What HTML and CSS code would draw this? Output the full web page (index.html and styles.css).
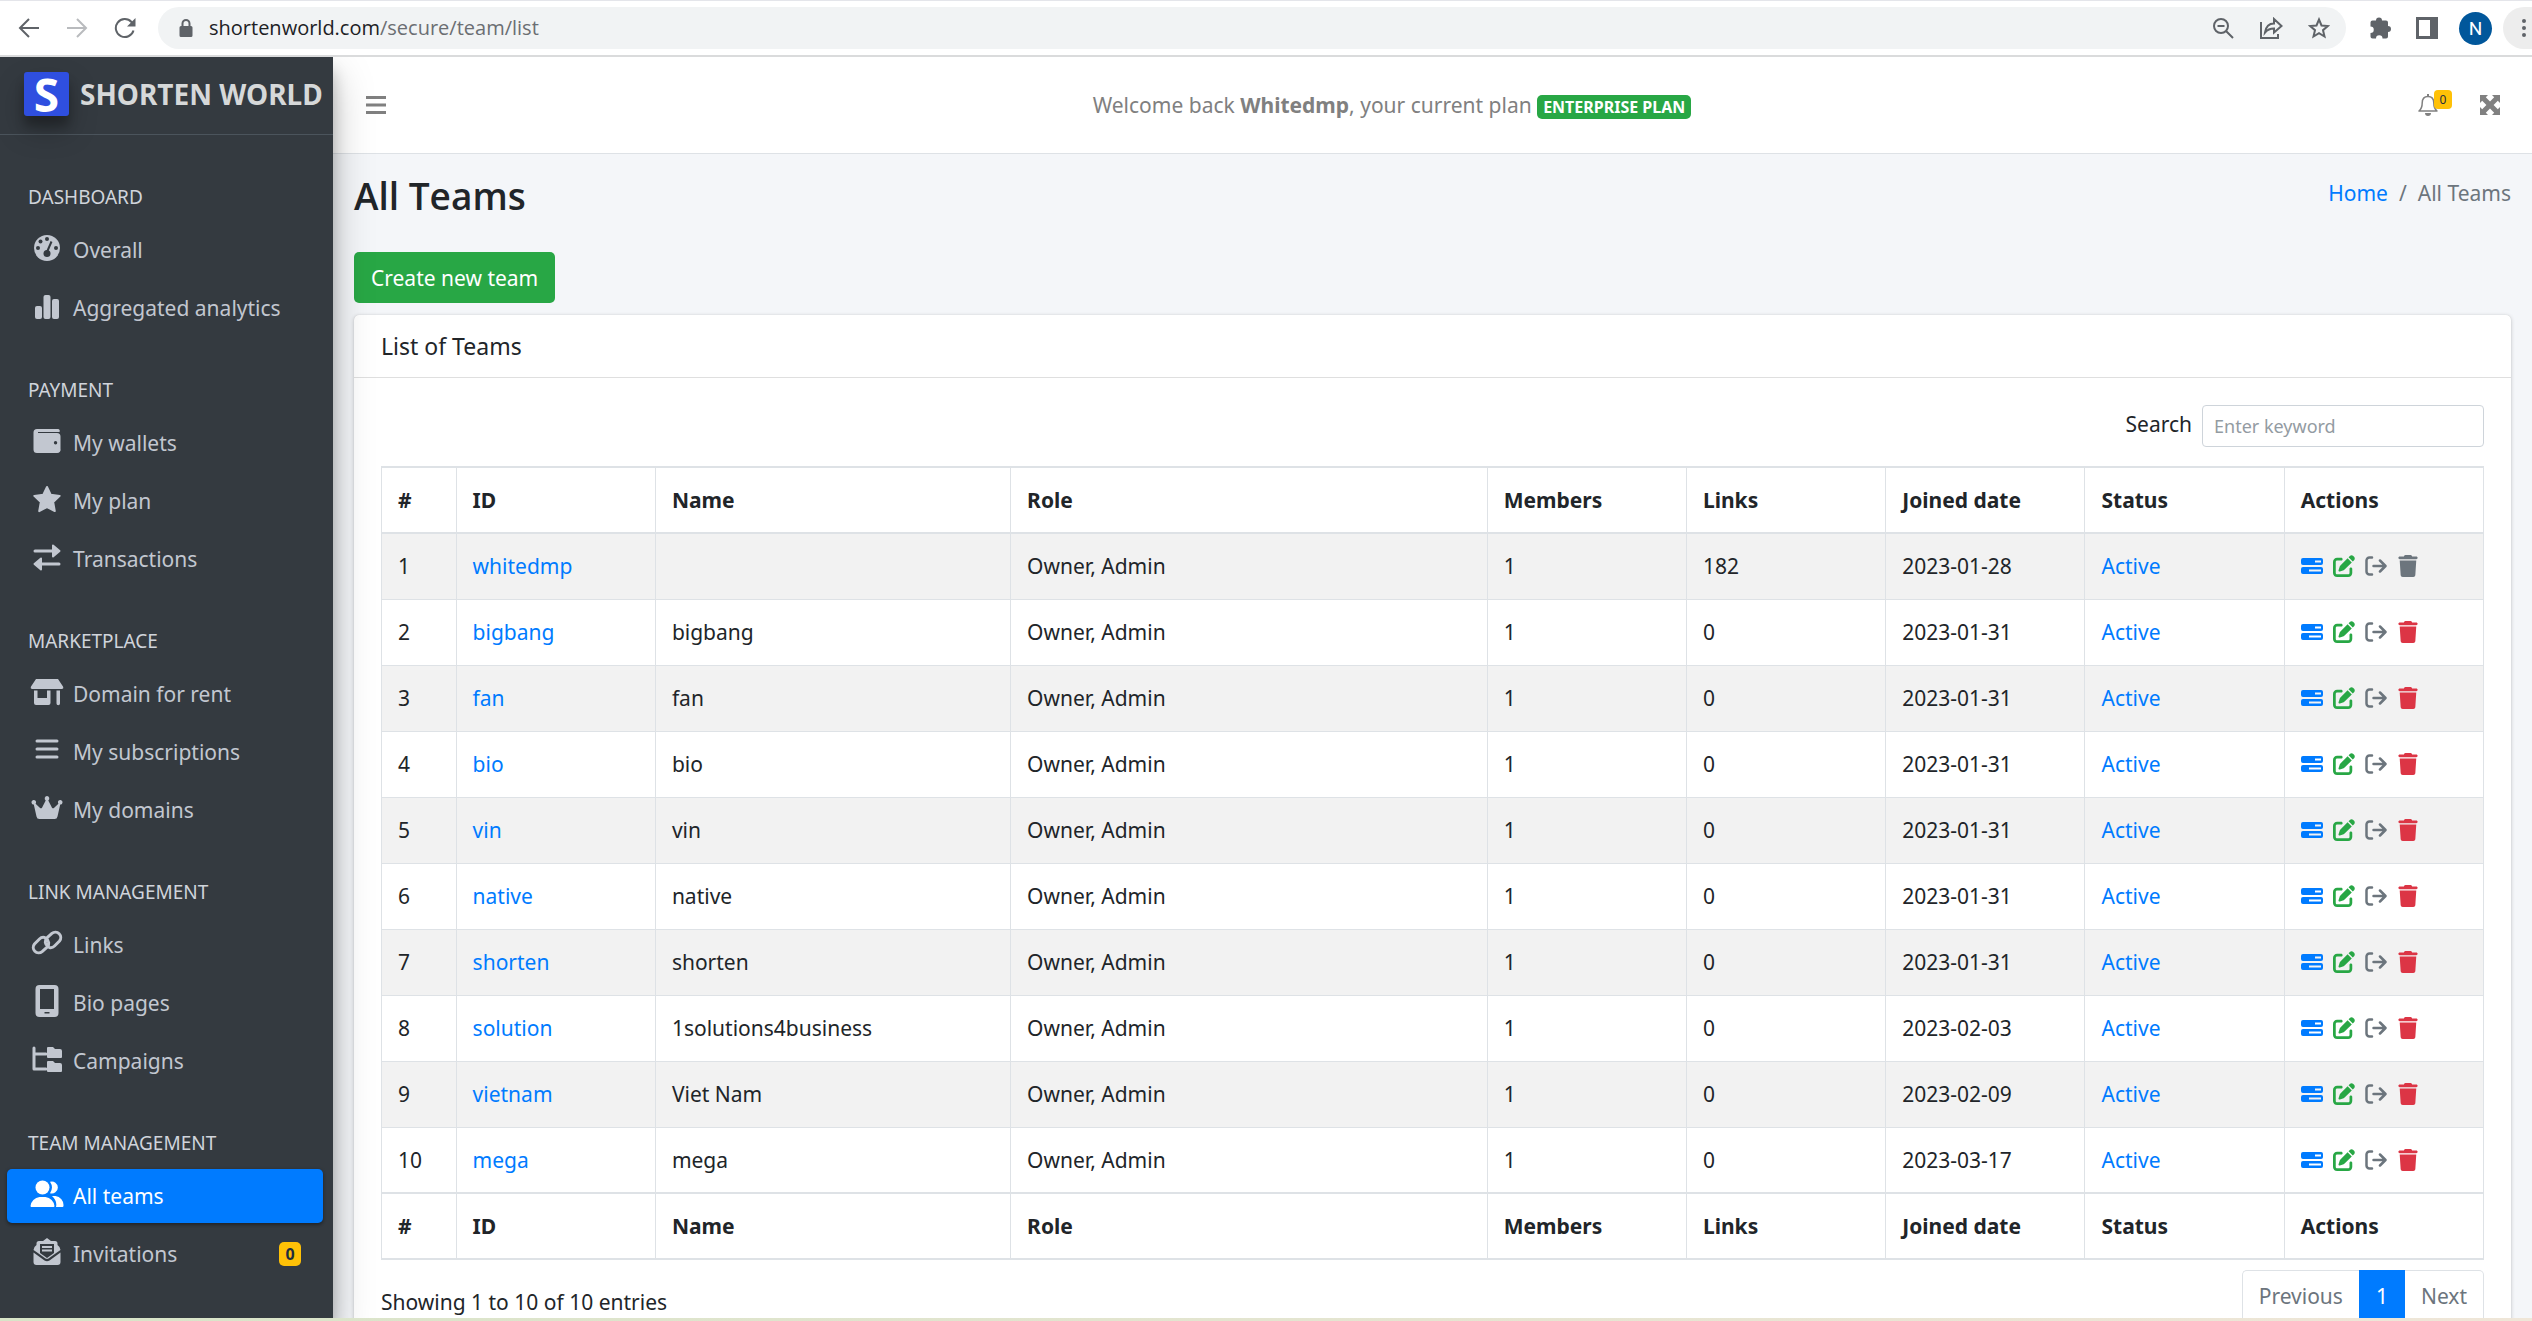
FILE: index.html
```html
<!DOCTYPE html>
<html lang="en">
<head>
<meta charset="utf-8">
<title>All Teams</title>
<link rel="stylesheet" href="styles.css">
</head>
<body>
<svg class="sprite" aria-hidden="true">
  <symbol id="server" viewBox="0 0 22 16"><path fill-rule="evenodd" d="M2 0h18a2 2 0 0 1 2 2v3a2 2 0 0 1-2 2H2a2 2 0 0 1-2-2V2a2 2 0 0 1 2-2zM14 2.500h6v2h-6zM2 9h18a2 2 0 0 1 2 2v3a2 2 0 0 1-2 2H2a2 2 0 0 1-2-2v-3a2 2 0 0 1 2-2zM8 11.500h12v2H8z"/></symbol>
  <symbol id="edit" viewBox="0 0 512 512"><path d="M490.300 40.400C512.200 62.270 512.200 97.730 490.300 119.600L460.100 149.900 362.100 51.880 392.400 21.660C414.300-.2135 449.700-.2135 471.600 21.660L490.300 40.400zM172.400 241.700L339.400 74.650 437.300 172.600 270.300 339.600C264.200 345.800 256.700 350.400 248.400 353.200L159.600 382.800C150.100 385.600 141.500 383.400 135 376.100 128.600 370.500 126.400 361 129.200 352.400L158.800 263.600C161.600 255.300 166.200 247.800 172.400 241.700zM192 63.100C209.700 63.100 224 78.330 224 96S209.700 128 192 128H96C78.330 128 64 142.300 64 160V416C64 433.700 78.330 448 96 448H352C369.700 448 384 433.700 384 416V320C384 302.300 398.300 288 416 288S448 302.300 448 320V416C448 469 405 512 352 512H96C42.980 512 0 469 0 416V160C0 106.100 42.980 64 96 64z"/></symbol>
  <symbol id="leave" viewBox="0 0 22 20"><path fill="none" stroke="currentColor" stroke-width="2.500" stroke-linecap="round" stroke-linejoin="round" d="M7 1.500H4.500a3 3 0 0 0-3 3v11a3 3 0 0 0 3 3H7M8.500 10H20M15 4.500l5.500 5.500-5.500 5.500"/></symbol>
  <symbol id="trash" viewBox="0 0 448 512"><path d="M135.200 17.690C140.600 6.848 151.700 0 163.800 0H284.200C296.300 0 307.400 6.848 312.800 17.690L320 32H416C433.700 32 448 46.330 448 64S433.700 96 416 96H32C14.330 96 0 81.670 0 64S14.330 32 32 32H128L135.200 17.690zM31.100 128H416L394.800 466.100C393.200 492.300 372.300 512 346.900 512H101.100C75.750 512 54.770 492.300 53.190 466.100L31.100 128z"/></symbol>
</svg>

<header class="browser">
  <div class="nav-buttons">
    <button class="icon-btn" aria-label="Back"><svg width="22" height="22" viewBox="0 0 22 22" class="line"><path d="M21 11H2M11 2l-9 9 9 9"/></svg></button>
    <button class="icon-btn faded" aria-label="Forward"><svg width="22" height="22" viewBox="0 0 22 22" class="line"><path d="M1 11h19M11 2l9 9-9 9"/></svg></button>
    <button class="icon-btn" aria-label="Reload"><svg width="22" height="22" viewBox="0 0 22 22" class="line"><path d="M19.500 13.500A9 9 0 1 1 17.500 5l2 2"/><path fill="currentColor" stroke="none" d="M21.500 1v8.500H13z"/></svg></button>
  </div>
  <div class="omnibox">
    <svg width="14" height="18" viewBox="0 0 14 18"><path fill="currentColor" d="M2 7h10a1.500 1.500 0 0 1 1.500 1.500v8A1.500 1.500 0 0 1 12 18H2a1.500 1.500 0 0 1-1.500-1.500v-8A1.500 1.500 0 0 1 2 7z"/><path fill="none" stroke="currentColor" stroke-width="2" d="M3.500 8V4.500a3.500 3.500 0 0 1 7 0V8"/></svg>
    <span class="url">shortenworld.com<span class="path">/secure/team/list</span></span>
    <button class="icon-btn" aria-label="Zoom"><svg width="22" height="22" viewBox="0 0 22 22" class="line"><circle cx="9" cy="9" r="7"/><path d="M5.500 9h7M14 14l7 7"/></svg></button>
    <button class="icon-btn" aria-label="Share"><svg width="24" height="22" viewBox="0 0 24 22" class="line thin"><path d="M2 5v16h17v-4M6 15.500C7 9 10 6.500 15 6.500V2l7.500 7L15 15.500V11.500c-4 0-6.500 1-9 4z"/></svg></button>
    <button class="icon-btn" aria-label="Bookmark"><svg width="22" height="22" viewBox="0 0 22 22" class="line"><path d="M11 2.500l2.500 6 6.300.5-4.800 4.200 1.500 6.300L11 16.200l-5.500 3.300L7 13.200 2.200 9l6.300-.5z"/></svg></button>
  </div>
  <button class="icon-btn" aria-label="Extensions"><svg width="24" height="22" viewBox="0 0 24 22"><path fill="currentColor" d="M1.500 5.500a2 2 0 0 1 2-2H7a3 3 0 0 1 6 0h4a2 2 0 0 1 2 2V9a3 3 0 0 1 0 6v4.500a2 2 0 0 1-2 2h-3.500a3.200 3.200 0 0 0-6.500 0H3.500a2 2 0 0 1-2-2V16a3.200 3.200 0 0 0 0-6.500z"/></svg></button>
  <button class="icon-btn" aria-label="Side panel"><svg width="22" height="22" viewBox="0 0 22 22"><path fill="currentColor" fill-rule="evenodd" d="M0 0h22v22H0zM3 3v16h11V3z"/></svg></button>
  <button class="avatar">N</button>
  <button class="more" aria-label="Menu"><svg width="6" height="20" viewBox="0 0 6 20" fill="currentColor"><circle cx="3" cy="3" r="2"/><circle cx="3" cy="10" r="2"/><circle cx="3" cy="17" r="2"/></svg></button>
</header>

<div class="app">
  <aside class="sidebar">
    <a class="brand" href="#"><span class="logo">S</span>SHORTEN WORLD</a>
    <nav class="menu">
      <h2>DASHBOARD</h2>
      <a href="#"><svg viewBox="0 0 34 28"><circle cx="17" cy="14" r="13"/><g class="cut"><circle cx="17" cy="5" r="2"/><circle cx="10.500" cy="7.500" r="2"/><circle cx="8" cy="14" r="2"/><circle cx="26" cy="14" r="2"/><circle cx="17" cy="19.500" r="3.500"/></g><path class="cut-line" d="M17 18l4.500-10.500"/></svg>Overall</a>
      <a href="#"><svg viewBox="0 0 34 28"><rect x="5" y="14" width="7" height="13" rx="2"/><rect x="13.500" y="3" width="7" height="24" rx="2"/><rect x="22" y="7" width="7" height="20" rx="2"/></svg>Aggregated analytics</a>
      <h2>PAYMENT</h2>
      <a href="#"><svg viewBox="0 0 34 28"><path fill-rule="evenodd" d="M7 2h21a2 2 0 0 1 1.500 3H8v1h19a3.500 3.500 0 0 1 3.500 3.500v12A3.500 3.500 0 0 1 27 26H7a3.500 3.500 0 0 1-3.500-3.500v-17A3.500 3.500 0 0 1 7 2zM25.500 14a1.700 1.700 0 1 0 .1 3.400A1.700 1.700 0 0 0 25.500 14z"/></svg>My wallets</a>
      <a href="#"><svg viewBox="0 0 34 28"><path stroke="currentColor" stroke-width="2" stroke-linejoin="round" d="M17 2l3.700 7.700 9 1.200-6.500 6.200 1.600 9L17 22l-7.800 4.100 1.600-9-6.500-6.200 9-1.200z"/></svg>My plan</a>
      <a href="#"><svg viewBox="0 0 34 28"><path class="stroke" d="M5 8h18M29 21H11"/><path stroke="currentColor" stroke-width="2" stroke-linejoin="round" d="M23 2.500v11L29.500 8zM11 15.500v11L4.500 21z"/></svg>Transactions</a>
      <h2>MARKETPLACE</h2>
      <a href="#"><svg viewBox="0 0 34 28"><path d="M6 1h22l5 7.500q1 2.500-1.500 2.500h-29Q0 11 1 8.500zM4 12.500h3.500V20H17v-7.500h3.500V25a2 2 0 0 1-2 2H6a2 2 0 0 1-2-2zM26.500 12.500H30v13a1.500 1.500 0 0 1-3.500 0z"/></svg>Domain for rent</a>
      <a href="#"><svg viewBox="0 0 34 28"><path class="stroke" d="M7 5h20M7 13h20M7 21h20"/></svg>My subscriptions</a>
      <a href="#"><svg viewBox="0 0 34 28"><path d="M17 2a2.500 2.500 0 0 1 1.300 4.500l3.700 7.200q1 1 2.200 0l4.200-4a2.300 2.300 0 1 1 1.800.9L27.500 22.500a3 3 0 0 1-3 2.500h-15a3 3 0 0 1-3-2.500L3.800 10.600a2.300 2.300 0 1 1 1.800-.9l4.200 4q1.200 1 2.200 0l3.700-7.200A2.500 2.500 0 0 1 17 2z"/></svg>My domains</a>
      <h2>LINK MANAGEMENT</h2>
      <a href="#"><svg viewBox="0 0 34 28"><path class="stroke" d="M19.500 18.500a5.500 5.500 0 0 0 5-1.500l5-5a5.400 5.400 0 0 0-7.600-7.600l-5 4.500a5.400 5.400 0 0 0 1 8.500M14.500 8.500a5.500 5.500 0 0 0-5 1.500l-5 5a5.400 5.400 0 0 0 7.600 7.600l5-4.500a5.400 5.400 0 0 0-1-8.500"/></svg>Links</a>
      <a href="#"><svg viewBox="0 0 34 32"><path fill-rule="evenodd" d="M9.500 0h15a4 4 0 0 1 4 4v24a4 4 0 0 1-4 4h-15a4 4 0 0 1-4-4V4a4 4 0 0 1 4-4zM10 4v20h14V4zM14.500 27v1.500h5V27z"/></svg>Bio pages</a>
      <a href="#"><svg viewBox="0 0 34 28"><path class="stroke" stroke-linejoin="round" d="M4 3v21h12M4 9h12"/><path d="M18 2h5l2 2h5a2 2 0 0 1 2 2v6a1 1 0 0 1-1 1H18a1 1 0 0 1-1-1V3a1 1 0 0 1 1-1zM18 16h5l2 2h5a2 2 0 0 1 2 2v6a1 1 0 0 1-1 1H18a1 1 0 0 1-1-1v-9a1 1 0 0 1 1-1z"/></svg>Campaigns</a>
      <h2>TEAM MANAGEMENT</h2>
      <a href="#" class="active"><svg viewBox="0 0 34 28"><circle cx="12.500" cy="7.500" r="7"/><path d="M.5 26a10 10 0 0 1 9-9h6a10 10 0 0 1 9 9q0 1-1 1h-22q-1 0-1-1zM20 1.800a6 6 0 1 1 0 11.400 10 10 0 0 0 0-11.400zM22 16h3.500a9 9 0 0 1 8 9.500q0 1.500-1 1.500H26q1.500-6-4-11z"/></svg>All teams</a>
      <a href="#"><svg viewBox="0 0 34 28"><path d="M3.500 14.500l11 8q2.500 1.500 5 0l11-8V24a3 3 0 0 1-3 3h-21a3 3 0 0 1-3-3z"/><path fill-rule="evenodd" d="M3.500 12q0-3 3-5V5.500q0-2.500 2.500-2.500h4l4-3 4 3h4q2.500 0 2.500 2.500V7q3 2 3 5l-4 2.800-8 5.700q-1.500.8-3 0L7.500 14.800zM10 6v9l7 5 7-5V6z"/><path d="M12 8h10v2H12zM12 11.500h10v2H12z"/></svg>Invitations<span class="count">0</span></a>
    </nav>
  </aside>

  <div class="main">
    <header class="topbar">
      <button class="icon-btn" aria-label="Toggle menu"><svg width="20" height="18" viewBox="0 0 20 18"><path fill="none" stroke="currentColor" stroke-width="3" d="M0 1.500h20M0 9h20M0 16.500h20"/></svg></button>
      <p class="welcome">Welcome back <b>Whitedmp</b>, your current plan <span class="plan">ENTERPRISE PLAN</span></p>
      <button class="icon-btn bell" aria-label="Notifications"><svg width="20" height="22" viewBox="0 0 20 22"><path fill="none" stroke="currentColor" stroke-width="1.500" stroke-linejoin="round" d="M10 2.500C5.500 2.500 4.200 6 4.200 9c0 4-.8 6-3.200 8h18c-2.400-2-3.200-4-3.200-8 0-3-1.300-6.500-5.800-6.500z"/><path fill="currentColor" d="M9 0h2v3H9zM7 19h6a3 3 0 0 1-6 0z"/></svg><span class="dot">0</span></button>
      <button class="icon-btn" aria-label="Full screen"><svg width="20" height="20" viewBox="0 0 20 20"><path fill="currentColor" d="M0 0h8L5.800 2.200 10 6.400l4.200-4.200L12 0h8v8l-2.200-2.200L13.600 10l4.200 4.200L20 12v8h-8l2.200-2.200L10 13.600l-4.200 4.200L8 20H0v-8l2.200 2.200L6.400 10 2.200 5.800 0 8z"/></svg></button>
    </header>

    <main class="content">
      <div class="page-head">
        <h1>All Teams</h1>
        <nav class="crumbs"><a href="#">Home</a><span>/</span><span>All Teams</span></nav>
      </div>
      <button class="create">Create new team</button>
      <section class="card">
        <h3 class="card-title">List of Teams</h3>
        <div class="card-body">
          <div class="search"><label for="q">Search</label><input id="q" type="text" placeholder="Enter keyword"></div>
          <table>
            <colgroup><col class="c-num"><col class="c-std"><col class="c-name"><col><col class="c-std"><col class="c-std"><col class="c-std"><col class="c-std"><col class="c-std"></colgroup>
            <thead><tr><th>#</th><th>ID</th><th>Name</th><th>Role</th><th>Members</th><th>Links</th><th>Joined date</th><th>Status</th><th>Actions</th></tr></thead>
            <tbody id="rows"></tbody>
            <tfoot><tr><th>#</th><th>ID</th><th>Name</th><th>Role</th><th>Members</th><th>Links</th><th>Joined date</th><th>Status</th><th>Actions</th></tr></tfoot>
          </table>
          <div class="table-foot">
            <p>Showing 1 to 10 of 10 entries</p>
            <nav class="pages"><button>Previous</button><button class="current">1</button><button>Next</button></nav>
          </div>
        </div>
      </section>
    </main>
  </div>
</div>
<div class="desktop-edge"></div>
<script src="teams.js"></script>
</body>
</html>
```
FILE: teams.js
```js
const teams = [
  ["whitedmp", "", 182, "2023-01-28"],
  ["bigbang", "bigbang", 0, "2023-01-31"],
  ["fan", "fan", 0, "2023-01-31"],
  ["bio", "bio", 0, "2023-01-31"],
  ["vin", "vin", 0, "2023-01-31"],
  ["native", "native", 0, "2023-01-31"],
  ["shorten", "shorten", 0, "2023-01-31"],
  ["solution", "1solutions4business", 0, "2023-02-03"],
  ["vietnam", "Viet Nam", 0, "2023-02-09"],
  ["mega", "mega", 0, "2023-03-17"]
];
const action = (name, label) =>
  `<button class="${name}" aria-label="${label}"><svg><use href="#${name}"/></svg></button>`;
document.getElementById("rows").innerHTML = teams.map(([id, name, links, date], i) => `
  <tr><td>${i + 1}</td><td><a href="#">${id}</a></td><td>${name}</td><td>Owner, Admin</td>
  <td>1</td><td>${links}</td><td>${date}</td><td><a href="#">Active</a></td>
  <td><div class="actions">${action("server", "Manage")}${action("edit", "Edit")}${action("leave", "Leave")}${action("trash", "Delete")}</div></td></tr>`).join("");
```
FILE: styles.css
```css
* { box-sizing: border-box; }
body {
  margin: 0;
  height: 100vh;
  overflow: hidden;
  display: flex;
  flex-direction: column;
  font: 21px/32px "Noto Sans", "Open Sans", sans-serif;
  color: #212529;
  background: #fff;
}
h1, h2, h3, p { margin: 0; font-weight: 400; }
a { color: #007bff; text-decoration: none; }
button { font: inherit; color: inherit; border: 0; padding: 0; background: none; }
svg { display: block; flex: none; }
.sprite { display: none; }
.icon-btn { display: flex; align-items: center; }
.line { fill: none; stroke: currentColor; stroke-width: 2; }

/* browser toolbar */
.browser {
  flex: none;
  height: 57px;
  display: flex;
  align-items: center;
  border-top: 1px solid #e4e5ea;
  border-bottom: 2px solid #dadbdc;
  color: #5f6368;
  overflow: hidden;
}
.nav-buttons { display: flex; gap: 26px; padding: 0 22px 0 18px; }
.faded { color: #b9bbbe; }
.omnibox {
  flex: 1;
  height: 42px;
  display: flex;
  align-items: center;
  gap: 25px;
  padding: 0 16px 0 21px;
  border-radius: 21px;
  background: #f1f3f4;
}
.url { flex: 1; margin-left: -9px; color: #202124; font-family: "Open Sans", sans-serif; font-size: 20px; }
.path { color: #6b6e72; }
.browser > .icon-btn { margin-left: 23px; }
.avatar {
  width: 33px;
  height: 33px;
  margin-left: 21px;
  border-radius: 50%;
  background: #01579b;
  color: #fff;
  font: 19px/33px Roboto, sans-serif;
}
.more {
  width: 29px;
  height: 42px;
  margin-left: 11px;
  padding-left: 18px;
  border-radius: 21px 0 0 21px;
  background: #ededed;
}

/* application */
.app { flex: 1; min-height: 0; display: flex; overflow: hidden; }
.sidebar {
  flex: none;
  width: 333px;
  z-index: 1;
  background: #343a40;
  box-shadow: 0 19px 38px rgba(0, 0, 0, .25), 0 14px 14px rgba(0, 0, 0, .22);
}
.brand {
  height: 78px;
  display: flex;
  align-items: center;
  gap: 11px;
  padding: 0 0 4px 24px;
  border-bottom: 1px solid #4b545c;
  color: #d6d8d9;
  font-size: 28px;
  font-weight: 700;
  white-space: nowrap;
}
.logo {
  width: 45px;
  height: 44px;
  border-radius: 3px;
  background: #2f4fe0;
  box-shadow: 0 14px 28px rgba(0, 0, 0, .25), 0 10px 10px rgba(0, 0, 0, .22);
  color: #fff;
  font: 700 46px/44px "Noto Sans", sans-serif;
  text-align: center;
}
.menu { padding: 11px 10px 0 7px; }
.menu h2 {
  padding: 37px 21px 12px;
  font-size: 19px;
  line-height: 28px;
  color: #d0d4db;
}
.menu a {
  height: 54px;
  display: flex;
  align-items: center;
  gap: 9px;
  margin-bottom: 4px;
  padding: 0 22px 0 23px;
  border-radius: 5px;
  color: #c2c7d0;
}
.menu svg { width: 34px; height: 32px; margin-bottom: 5px; fill: currentColor; }
.menu .cut { fill: #343a40; }
.menu .cut-line { stroke: #343a40; stroke-width: 2; }
.menu .stroke { fill: none; stroke: currentColor; stroke-width: 3; stroke-linecap: round; }
.menu .active {
  background: #007bff;
  color: #fff;
  box-shadow: 0 1px 4px rgba(0, 0, 0, .2), 0 2px 3px rgba(0, 0, 0, .24);
}
.count {
  margin-left: auto;
  width: 22px;
  border-radius: 5px;
  background: #ffc107;
  color: #1f2d3d;
  font-size: 16px;
  line-height: 24px;
  font-weight: 700;
  text-align: center;
}

.main { flex: 1; min-width: 0; background: #f4f6f9; }
.topbar {
  height: 97px;
  display: flex;
  align-items: center;
  padding: 0 32px 0 33px;
  border-bottom: 1px solid #dee2e6;
  background: #fff;
  color: #808080;
}
.welcome { flex: 1; padding-right: 20px; text-align: center; }
.plan {
  display: inline-block;
  padding: 0 6px;
  border-radius: 5px;
  background: #28a745;
  color: #fff;
  font-size: 16px;
  line-height: 24px;
  font-weight: 700;
}
.bell { position: relative; margin-right: 42px; }
.dot {
  position: absolute;
  left: 16px;
  top: -4px;
  width: 18px;
  border-radius: 4px;
  background: #ffc107;
  color: #1f2d3d;
  font-size: 12px;
  line-height: 19px;
}

.content { padding: 18px 21px; }
.page-head { display: flex; justify-content: space-between; }
h1 { font: 600 37px/48px "Open Sans", "Noto Sans", sans-serif; }
.crumbs { display: flex; gap: 11px; padding-top: 5px; color: #6c757d; }
.create {
  display: block;
  height: 51px;
  margin: 32px 0 12px;
  padding: 0 17px;
  border-radius: 5px;
  background: #28a745;
  color: #fff;
}
.card {
  border-radius: 5px;
  background: #fff;
  box-shadow: 0 0 1px rgba(0, 0, 0, .13), 0 1px 4px rgba(0, 0, 0, .2);
}
.card-title {
  padding: 15px 27px;
  border-bottom: 1px solid #dfdfdf;
  font-size: 23px;
}
.card-body { padding: 27px; }
.search { display: flex; justify-content: flex-end; gap: 10px; margin-bottom: 19px; }
.search label { padding-top: 3px; }
.search input {
  width: 282px;
  height: 42px;
  padding: 0 11px;
  border: 1px solid #ced4da;
  border-radius: 4px;
  font: 18px/28px "Noto Sans", sans-serif;
}
.search input::placeholder { color: #939ba2; }

table { width: 100%; table-layout: fixed; border-collapse: collapse; }
.c-num { width: 3.55%; }
.c-std { width: 9.48%; }
.c-name { width: 16.9%; }
th, td {
  height: 66px;
  padding: 0 16px;
  border: 1px solid #dee2e6;
  text-align: left;
}
thead th { border-top-width: 2px; border-bottom-width: 2px; }
tfoot th { border-top-width: 2px; border-bottom-width: 2px; }
tbody tr:nth-child(odd) { background: #f2f2f2; }
.actions { display: flex; align-items: center; gap: 10px; }
.actions svg { width: 22px; height: 22px; fill: currentColor; }
.server { color: #007bff; }
.edit { color: #28a745; }
.leave { color: #6c757d; }
.trash { color: #dc3545; }
tr:first-child .trash { color: #6c757d; }

.table-foot { display: flex; justify-content: space-between; margin-top: 10px; }
.table-foot p { padding-top: 16px; }
.pages { display: flex; color: #6c757d; }
.pages button { height: 52px; padding: 0 16px; border: 1px solid #dee2e6; background: #fff; }
.pages button:first-child { border-radius: 5px 0 0 5px; border-right: 0; }
.pages button:last-child { border-radius: 0 5px 5px 0; border-left: 0; }
.pages .current { border-color: #007bff; background: #007bff; color: #fff; }
.desktop-edge { flex: none; height: 3px; background: linear-gradient(90deg, #d8e4c8, #efe6d8); }
```
